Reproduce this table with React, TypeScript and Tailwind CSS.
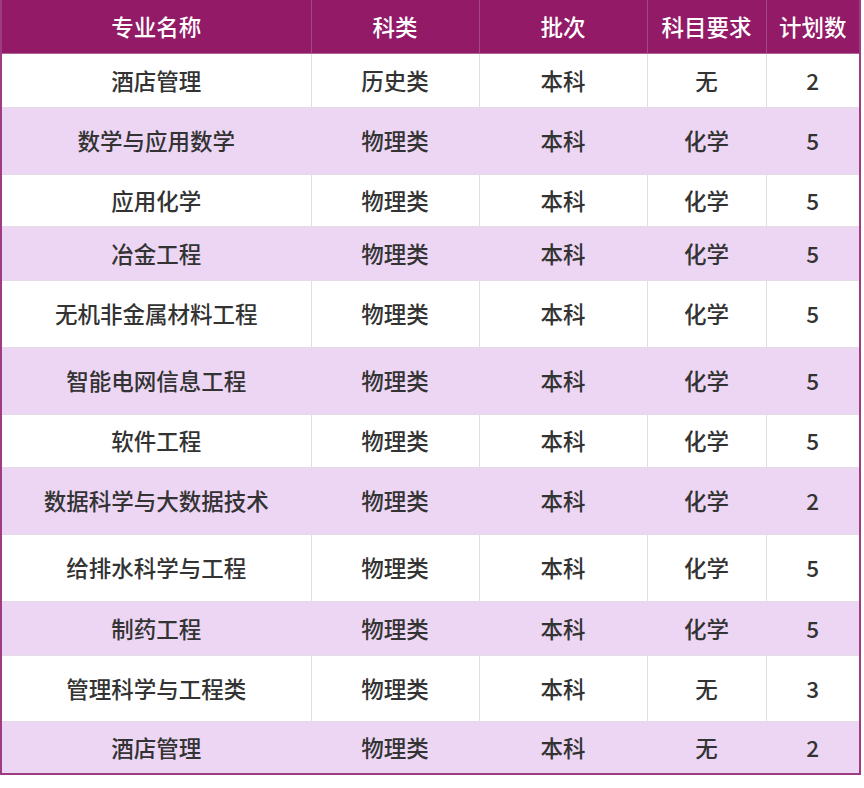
type Row = { name: string; kind: string; batch: string; req: string; plan: number; h: string };

const rows: Row[] = [
  { name: "酒店管理", kind: "历史类", batch: "本科", req: "无", plan: 2, h: "h-[54px]" },
  { name: "数学与应用数学", kind: "物理类", batch: "本科", req: "化学", plan: 5, h: "h-[67px]" },
  { name: "应用化学", kind: "物理类", batch: "本科", req: "化学", plan: 5, h: "h-[52px]" },
  { name: "冶金工程", kind: "物理类", batch: "本科", req: "化学", plan: 5, h: "h-[54px]" },
  { name: "无机非金属材料工程", kind: "物理类", batch: "本科", req: "化学", plan: 5, h: "h-[67px]" },
  { name: "智能电网信息工程", kind: "物理类", batch: "本科", req: "化学", plan: 5, h: "h-[67px]" },
  { name: "软件工程", kind: "物理类", batch: "本科", req: "化学", plan: 5, h: "h-[53px]" },
  { name: "数据科学与大数据技术", kind: "物理类", batch: "本科", req: "化学", plan: 2, h: "h-[67px]" },
  { name: "给排水科学与工程", kind: "物理类", batch: "本科", req: "化学", plan: 5, h: "h-[67px]" },
  { name: "制药工程", kind: "物理类", batch: "本科", req: "化学", plan: 5, h: "h-[54px]" },
  { name: "管理科学与工程类", kind: "物理类", batch: "本科", req: "无", plan: 3, h: "h-[66px]" },
  { name: "酒店管理", kind: "物理类", batch: "本科", req: "无", plan: 2, h: "h-[53px]" },
];

const headers = ["专业名称", "科类", "批次", "科目要求", "计划数"];

export default function App() {
  return (
    <div className="w-[864px] h-[788px] bg-white" style={{ fontFamily: '"Noto Sans CJK SC", "Noto Sans", sans-serif' }}>
      <table className="w-[859px] table-fixed border-collapse border-x-2 border-b-2 border-[#9d3c80] text-[22.5px] font-medium">
        <colgroup>
          <col className="w-[310px]" />
          <col className="w-[168px]" />
          <col className="w-[168px]" />
          <col className="w-[119px]" />
          <col className="w-[94px]" />
        </colgroup>
        <thead>
          <tr className="h-[53px] bg-[#921a66] text-white">
            {headers.map((h) => (
              <th key={h} className="border-l border-b border-l-[#a6478a] border-b-[#b0659a] first:border-l-0 p-0 font-medium text-center leading-none">
                {h}
              </th>
            ))}
          </tr>
        </thead>
        <tbody className="text-[#333333]">
          {rows.map((r, i) => (
            <tr key={i} className={`${r.h} ${i % 2 === 1 ? "bg-[#ecd6f3]" : "bg-white"}`}>
              {[r.name, r.kind, r.batch, r.req, String(r.plan)].map((c, j) => (
                <td key={j} className="border-l border-b border-[#e4dbe6] first:border-l-0 p-0 text-center leading-none">
                  {c}
                </td>
              ))}
            </tr>
          ))}
        </tbody>
      </table>
    </div>
  );
}
